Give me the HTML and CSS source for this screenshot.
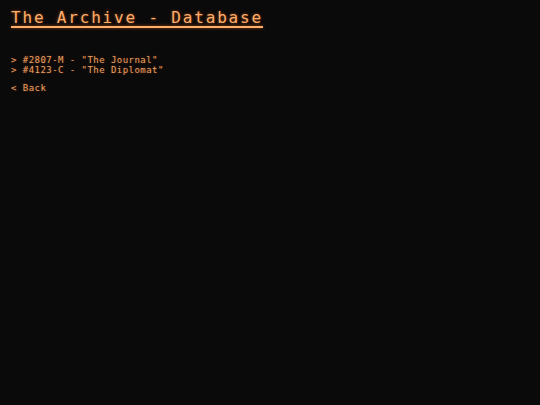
FILE: index.html
```html
<!DOCTYPE html>
<html>
<head>
<meta charset="utf-8">
<link rel="stylesheet" href="styles.css">
</head>
<body>
<div class="screen">
  <h1 class="title">The Archive - Database</h1>
  <ul class="entries">
    <li class="entry">&gt; #2807-M - "The Journal"</li>
    <li class="entry">&gt; #4123-C - "The Diplomat"</li>
  </ul>
  <div class="back">&lt; Back</div>
</div>
</body>
</html>
```
FILE: styles.css
```css
html, body {
  margin: 0;
  padding: 0;
  background: #0b0a0a;
  width: 540px;
  height: 405px;
  overflow: hidden;
}
.screen {
  padding: 8px 11px 0 11px;
  font-family: "DejaVu Sans Mono", "Liberation Mono", monospace;
  color: #e59f63;
}
.title {
  margin: 0;
  font-size: 16px;
  line-height: 20px;
  font-weight: normal;
  letter-spacing: 1.82px;
  color: #ffad6a;
  text-decoration: underline;
  text-decoration-thickness: 2px;
  text-underline-offset: 3px;
  text-shadow: 0 0 3px rgba(255, 120, 30, 0.55);
  display: inline-block;
}
.entries {
  list-style: none;
  margin: 27px 0 0 0;
  padding: 0;
}
.entry, .back {
  font-size: 9px;
  line-height: 10px;
  letter-spacing: 0.46px;
  white-space: pre;
  text-shadow: 0 0 2px rgba(255, 110, 20, 0.4);
}
.back {
  margin-top: 8px;
}
```
